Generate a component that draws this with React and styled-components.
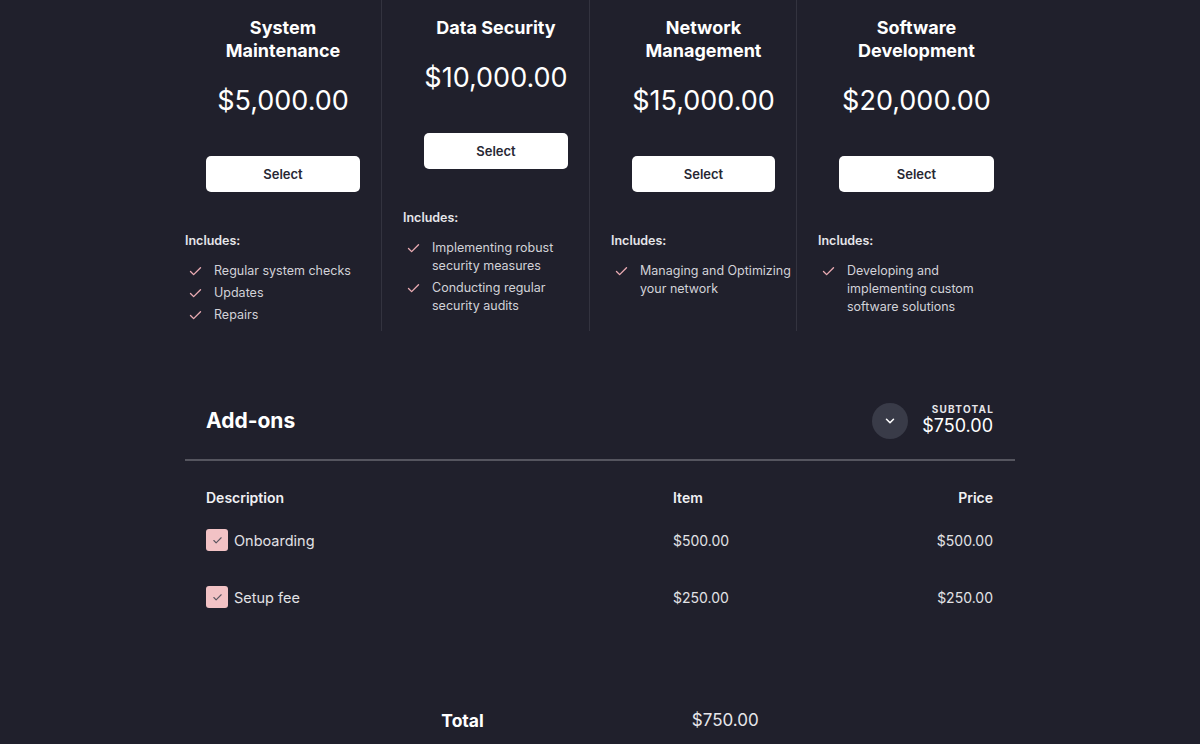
import React from "react";
import styled, { createGlobalStyle } from "styled-components";

const plans = [
  {
    title: ["System", "Maintenance"],
    price: "$5,000.00",
    items: [["Regular system checks"], ["Updates"], ["Repairs"]],
  },
  {
    title: ["Data Security"],
    price: "$10,000.00",
    items: [
      ["Implementing robust", "security measures"],
      ["Conducting regular", "security audits"],
    ],
  },
  {
    title: ["Network", "Management"],
    price: "$15,000.00",
    items: [["Managing and Optimizing", "your network"]],
  },
  {
    title: ["Software", "Development"],
    price: "$20,000.00",
    items: [["Developing and", "implementing custom", "software solutions"]],
  },
];

const addons = [
  { name: "Onboarding", item: "$500.00", price: "$500.00" },
  { name: "Setup fee", item: "$250.00", price: "$250.00" },
];

const Check = () => (
  <svg width="15" height="15" viewBox="0 0 24 24" fill="none" stroke="#e9aab2" strokeWidth="2.2" strokeLinecap="round" strokeLinejoin="round">
    <path d="M20 6 9 17l-5-5" />
  </svg>
);

const App = () => {
  return (
    <>
      <GlobalStyle />
      <Page>
        <Plans>
          {plans.map((p, i) => (
            <Plan key={i} $first={i === 0}>
              <Title>
                {p.title.map((t, j) => (
                  <div key={j}>{t}</div>
                ))}
              </Title>
              <Price>{p.price}</Price>
              <ButtonWrap>
                <SelectButton>Select</SelectButton>
              </ButtonWrap>
              <Includes>Includes:</Includes>
              <List>
                {p.items.map((lines, j) => (
                  <Item key={j}>
                    <CheckBox>
                      <Check />
                    </CheckBox>
                    <span>
                      {lines.map((l, k) => (
                        <Line key={k}>{l}</Line>
                      ))}
                    </span>
                  </Item>
                ))}
              </List>
            </Plan>
          ))}
        </Plans>

        <AddonsHeader>
          <AddonsTitle>Add-ons</AddonsTitle>
          <HeaderRight>
            <Toggle>
              <svg width="14" height="14" viewBox="0 0 24 24" fill="none" stroke="#fff" strokeWidth="2.6" strokeLinecap="round" strokeLinejoin="round">
                <path d="m6 9 6 6 6-6" />
              </svg>
            </Toggle>
            <Subtotal>
              <SubLabel>SUBTOTAL</SubLabel>
              <SubValue>$750.00</SubValue>
            </Subtotal>
          </HeaderRight>
        </AddonsHeader>
        <Rule />

        <Table>
          <HeadCell>Description</HeadCell>
          <HeadCell>Item</HeadCell>
          <HeadCell $right>Price</HeadCell>
          {addons.map((a) => (
            <React.Fragment key={a.name}>
              <Cell $name>
                <Box>
                  <svg width="11" height="11" viewBox="0 0 24 24" fill="none" stroke="#5b5660" strokeWidth="2.4" strokeLinecap="round" strokeLinejoin="round">
                    <path d="M20 6 9 17l-5-5" />
                  </svg>
                </Box>
                {a.name}
              </Cell>
              <Cell>{a.item}</Cell>
              <Cell $right>{a.price}</Cell>
            </React.Fragment>
          ))}
        </Table>

        <TotalRow>
          <TotalLabel>Total</TotalLabel>
          <TotalValue>$750.00</TotalValue>
        </TotalRow>
      </Page>
    </>
  );
};

export default App;

const GlobalStyle = createGlobalStyle`
  html, body {
    margin: 0;
    background: #20202c;
    font-family: Inter, "Noto Sans", sans-serif;
    color: #fff;
  }
  * { box-sizing: border-box; }
`;

const Page = styled.div`
  width: 830px;
  margin: 0 auto;
  height: 744px;
  overflow: hidden;
`;

const Plans = styled.div`
  display: grid;
  grid-template-columns: 196px 208px 207px 219px;
`;

const Plan = styled.div`
  padding: 16px 0 7px ${(p) => (p.$first ? "0" : "21px")};
  border-left: ${(p) => (p.$first ? "none" : "1px solid #33333f")};
  display: flex;
  flex-direction: column;
`;

const Title = styled.div`
  text-align: center;
  font-size: 18px;
  font-weight: 700;
  line-height: 23px;
  color: #fff;
`;

const Price = styled.div`
  text-align: center;
  font-size: 27px;
  font-weight: 400;
  line-height: 34px;
  margin-top: 22px;
  margin-bottom: -1px;
  color: #fff;
`;

const ButtonWrap = styled.div`
  padding: 0 21px;
  margin-top: 39px;
`;

const SelectButton = styled.button`
  width: 100%;
  height: 36px;
  border: none;
  border-radius: 5px;
  background: #fff;
  color: #272733;
  font-family: Inter, sans-serif;
  font-size: 13px;
  font-weight: 600;
  cursor: pointer;
`;

const Includes = styled.div`
  margin-top: 40px;
  font-size: 12.5px;
  font-weight: 600;
  line-height: 18px;
  color: #e6e6ea;
`;

const List = styled.ul`
  list-style: none;
  margin: 12px 0 0;
  padding: 0;
  display: flex;
  flex-direction: column;
  gap: 4px;
`;

const Item = styled.li`
  display: flex;
  font-size: 12.5px;
  line-height: 18px;
  color: #d2d2d8;
`;

const Line = styled.div`
  white-space: nowrap;
`;

const CheckBox = styled.span`
  width: 29px;
  flex-shrink: 0;
  display: flex;
  align-items: center;
  height: 18px;
  padding-left: 3px;
`;

const AddonsHeader = styled.div`
  display: flex;
  justify-content: space-between;
  align-items: center;
  margin-top: 72px;
  padding: 0 22px 0 21px;
  height: 36px;
`;

const AddonsTitle = styled.h2`
  margin: 0 0 1px;
  font-size: 21px;
  font-weight: 700;
  color: #fff;
`;

const HeaderRight = styled.div`
  display: flex;
  align-items: center;
  gap: 14px;
`;

const Toggle = styled.div`
  width: 36px;
  height: 36px;
  border-radius: 50%;
  background: #393b48;
  display: flex;
  align-items: center;
  justify-content: center;
`;

const Subtotal = styled.div`
  display: flex;
  flex-direction: column;
  align-items: flex-end;
  margin-top: -2px;
`;

const SubLabel = styled.div`
  font-size: 10px;
  font-weight: 700;
  letter-spacing: 1.2px;
  line-height: 12px;
  margin-right: -1px;
  color: #e6e6ea;
`;

const SubValue = styled.div`
  font-size: 18px;
  line-height: 22px;
  color: #fff;
`;

const Rule = styled.div`
  height: 2px;
  background: #55555f;
  margin-top: 20px;
`;

const Table = styled.div`
  display: grid;
  grid-template-columns: 467px 1fr auto;
  grid-template-rows: 37px;
  grid-auto-rows: 57px;
  padding: 18px 22px 0 21px;
`;

const HeadCell = styled.div`
  font-size: 14px;
  font-weight: 600;
  color: #f0f0f3;
  text-align: ${(p) => (p.$right ? "right" : "left")};
  line-height: 37px;
`;

const Cell = styled.div`
  display: flex;
  align-items: center;
  justify-content: ${(p) => (p.$right ? "flex-end" : "flex-start")};
  gap: 6px;
  font-size: ${(p) => (p.$name ? "14.5px" : "14px")};
  color: #e2e2e6;
  height: 22px;
  margin-top: 13px;
`;

const Box = styled.span`
  width: 22px;
  height: 22px;
  border-radius: 3px;
  background: #f2c2c5;
  display: flex;
  align-items: center;
  justify-content: center;
`;

const TotalRow = styled.div`
  display: flex;
  justify-content: center;
  gap: 208px;
  margin-top: 80px;
`;

const TotalLabel = styled.div`
  font-size: 17.5px;
  font-weight: 700;
  color: #fff;
`;

const TotalValue = styled.div`
  font-size: 17px;
  color: #e6e6ea;
`;
